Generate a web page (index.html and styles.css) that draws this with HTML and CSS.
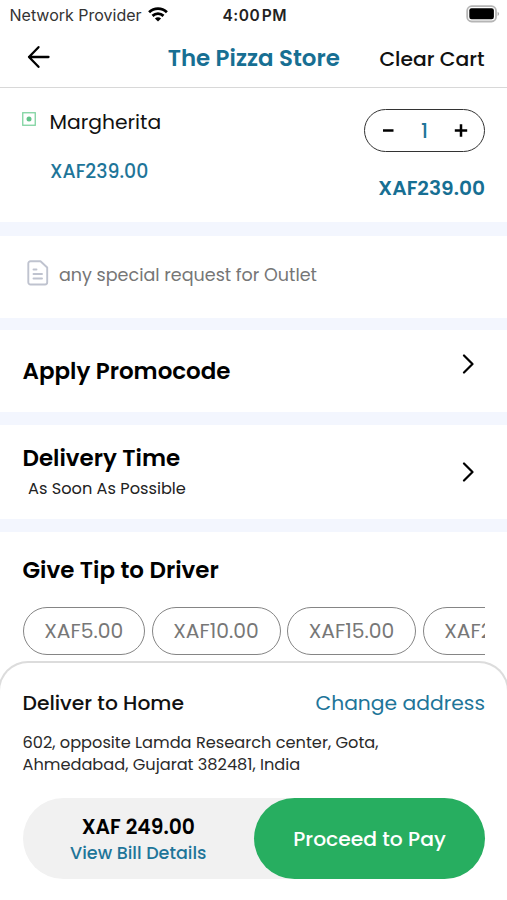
FILE: index.html
```html
<!DOCTYPE html>
<html lang="en">
<head>
<meta charset="utf-8">
<meta name="viewport" content="width=device-width, initial-scale=1">
<title>Cart</title>
<link rel="stylesheet" href="styles.css">
</head>
<body>
<div class="screen">
  <div class="status">
    <div class="carrier">
      <span>Network Provider</span>
      <svg width="20" height="15" viewBox="0 0 20 15"><g fill="none" stroke="#000" stroke-width="2.8"><path d="M1.1 5.2C6.2.4 13.8.4 18.9 5.2"/><path d="M4.5 8.9c3.2-2.9 7.8-2.9 11 0"/></g><path d="M10 14.5 6.9 11.4c1.8-1.6 4.4-1.6 6.2 0z"/></svg>
    </div>
    <span class="clock">4:00 PM</span>
    <svg class="battery" width="34" height="18" viewBox="0 0 34 18"><rect x="1.2" y="1.2" width="28.8" height="15.3" rx="4.5" fill="#fff" stroke="#b5b5b5" stroke-width="1.8"/><rect x="3.3" y="3.3" width="24.6" height="11" rx="2.2"/><path d="M31.6 6.8c2 .8 2 3.4 0 4.2z" fill="#aaa"/></svg>
  </div>
  <header class="header">
    <svg class="back" width="24" height="24" viewBox="0 0 24 24" fill="none" stroke="#000" stroke-width="2.3" stroke-linecap="round" stroke-linejoin="round"><path d="M22.5 12H3M12.5 2.2 3 12l9.500 9.800"/></svg>
    <h1 class="title">The Pizza Store</h1>
    <span class="clear">Clear Cart</span>
  </header>

  <section class="item">
    <svg class="veg" width="14" height="14" viewBox="0 0 14 14"><rect x=".75" y=".75" width="12.5" height="12.5" fill="none" stroke="#7fd3a0" stroke-width="1.3"/><circle cx="7" cy="7" r="2.5" fill="#62c48a"/></svg>
    <div class="item-info">
      <div class="item-name">Margherita</div>
      <div class="item-price">XAF239.00</div>
    </div>
    <div class="item-side">
      <div class="stepper">
        <svg width="14" height="14" viewBox="0 0 14 14" stroke="#000" stroke-width="2.5"><path d="M2 6.500h10.500"/></svg>
        <span>1</span>
        <svg width="14" height="14" viewBox="0 0 14 14" stroke="#000" stroke-width="2.5"><path d="M.8 6.500h12.400M7 .3v12.400"/></svg>
      </div>
      <div class="item-total">XAF239.00</div>
    </div>
  </section>

  <section class="note">
    <svg width="22" height="26" viewBox="0 0 22 26" fill="none" stroke="#bfc3cf" stroke-width="1.9" stroke-linejoin="round" stroke-linecap="round"><path d="M3.5 1.2h10L20.200 7.5v14.800a2.200 2.200 0 0 1-2.200 2.200H3.500a2.200 2.200 0 0 1-2.200-2.200V3.400a2.200 2.200 0 0 1 2.200-2.200z"/><path d="M6.500 9.500h3M6.500 14h8.500M6.500 18.500h8.500"/></svg>
    <span>any special request for Outlet</span>
  </section>

  <section class="row promo">
    <h2>Apply Promocode</h2>
    <svg class="chevron" width="12" height="20" viewBox="0 0 12 20"><path d="m2 1.500 8.500 8.500L2 18.500"/></svg>
  </section>

  <section class="row delivery">
    <div>
      <h2>Delivery Time</h2>
      <p>As Soon As Possible</p>
    </div>
    <svg class="chevron" width="12" height="20" viewBox="0 0 12 20"><path d="m2 1.500 8.500 8.500L2 18.500"/></svg>
  </section>

  <section class="tip">
    <h2>Give Tip to Driver</h2>
    <div class="chips">
      <span class="chip small">XAF5.00</span>
      <span class="chip">XAF10.00</span>
      <span class="chip">XAF15.00</span>
      <span class="chip wide">XAF20.00</span>
    </div>
  </section>

  <footer class="sheet">
    <div class="address-head">
      <span class="home">Deliver to Home</span>
      <span class="change">Change address</span>
    </div>
    <p class="address">602, opposite Lamda Research center, Gota,<br>Ahmedabad, Gujarat 382481, India</p>
    <div class="paybar">
      <div class="bill">
        <span class="amount">XAF 249.00</span>
        <span class="details">View Bill Details</span>
      </div>
      <div class="pay">Proceed to Pay</div>
    </div>
  </footer>
</div>
</body>
</html>
```
FILE: styles.css
```css
* { box-sizing: border-box; }
body { margin: 0; background: #fff; color: #111; font-family: Poppins, Inter, sans-serif; }
h1, h2, p { margin: 0; }
svg { display: block; flex: none; }
span, h1, h2, p, div { white-space: nowrap; }

.screen { width: 507px; height: 900px; overflow: hidden; display: flex; flex-direction: column; }
.screen > * { flex: none; }

.status { height: 29px; display: grid; grid-template-columns: 1fr auto 1fr; align-items: center; padding: 1px 7px 0 9.500px; font-family: Inter, sans-serif; }
.carrier { display: flex; gap: 6px; align-items: center; font-size: 16px; color: #333; }
.carrier svg { margin-top: -2px; }
.clock { font-size: 15.500px; font-weight: 600; letter-spacing: .5px; word-spacing: -3px; color: #222; }
.battery { justify-self: end; margin-top: -2px; }

.header { height: 59px; display: grid; grid-template-columns: 1fr auto 1fr; align-items: center; padding: 0 22.500px 1px 26px; border-bottom: 1.500px solid #d8d8d8; }
.back { margin-top: -2px; }
.title { margin-left: -3px; font-size: 22.900px; line-height: 30px; font-weight: 600; color: #176f93; }
.clear { justify-self: end; font-size: 20.300px; line-height: 30px; font-weight: 500; padding-top: 2px; }

.item { height: 134px; display: flex; padding: 19px 22px 0; }
.veg { margin-top: 5px; }
.item-info { padding-left: 12px; flex: 1; }
.item-name { margin-left: 1.500px; font-size: 20.300px; line-height: 30px; }
.item-price { margin: 21px 0 0 2px; font-size: 18.900px; line-height: 28px; font-weight: 500; color: #1e7599; }
.item-side { padding-top: 2px; }
.stepper { width: 121px; height: 43px; border: 1.500px solid #333; border-radius: 22px; display: flex; align-items: center; justify-content: space-between; padding: 0 16px; }
.stepper span { font-size: 20px; line-height: 28px; font-weight: 500; color: #1e7599; }
.item-total { margin-top: 22px; text-align: right; font-size: 20.200px; line-height: 28px; font-weight: 600; color: #176f93; }

.note, .row, .tip { border-top: 13px solid #f3f6fe; }
.note { border-top-width: 14px; height: 96px; display: flex; gap: 10px; padding: 24px 27px; font-size: 17.550px; line-height: 31px; color: #767676; }
.row { display: flex; justify-content: space-between; padding: 0 33px 0 22.500px; }
.promo { border-top-width: 12px; height: 94px; }
.promo h2 { margin-top: 26px; }
.promo .chevron { margin-top: 24px; }
h2 { font-size: 22.950px; line-height: 30px; font-weight: 600; color: #000; }
.chevron path { fill: none; stroke: #000; stroke-width: 2.200; stroke-linecap: round; stroke-linejoin: round; }
.delivery { height: 107px; }
.delivery h2 { margin-top: 18px; }
.delivery p { margin: 4px 0 0 5.500px; font-size: 16.200px; line-height: 24px; color: #222; }
.delivery .chevron { margin-top: 37px; }

.tip { height: 142px; padding: 23px 22px 0 22.500px; }
.chips { display: flex; gap: 6.500px; margin-top: 22px; overflow: hidden; }
.chip { flex: none; width: 129px; height: 48px; border: 1.500px solid #858585; border-radius: 24px; text-align: center; font-size: 20.300px; line-height: 47px; color: #777; }
.chip.small { width: 122.500px; }
.chip.wide { width: 134px; }

.sheet { height: 240px; margin: 0 -2px; border: 2px solid #dcdcdc; border-bottom: 0; border-radius: 30px 30px 0 0; padding: 25px 22px 0 22.500px; background: #fff; }
.address-head { display: flex; justify-content: space-between; line-height: 30px; }
.home { font-size: 20.300px; font-weight: 500; }
.change { font-size: 20.300px; color: #1e7599; }
.address { margin-top: 14px; font-size: 16.200px; line-height: 22px; color: #2a2a2a; }
.paybar { margin-top: 21.500px; display: flex; height: 81px; border-radius: 41px; background: #f1f1f1; }
.bill { flex: 1; display: flex; flex-direction: column; align-items: center; padding-top: 15px; }
.amount { font-size: 20.300px; line-height: 28px; font-weight: 600; color: #000; }
.details { font-size: 17.550px; line-height: 24px; font-weight: 500; color: #1e7599; }
.pay { width: 231px; border-radius: 41px; background: #27ae60; color: #fff; text-align: center; font-size: 20.300px; line-height: 82px; font-weight: 500; }
```
